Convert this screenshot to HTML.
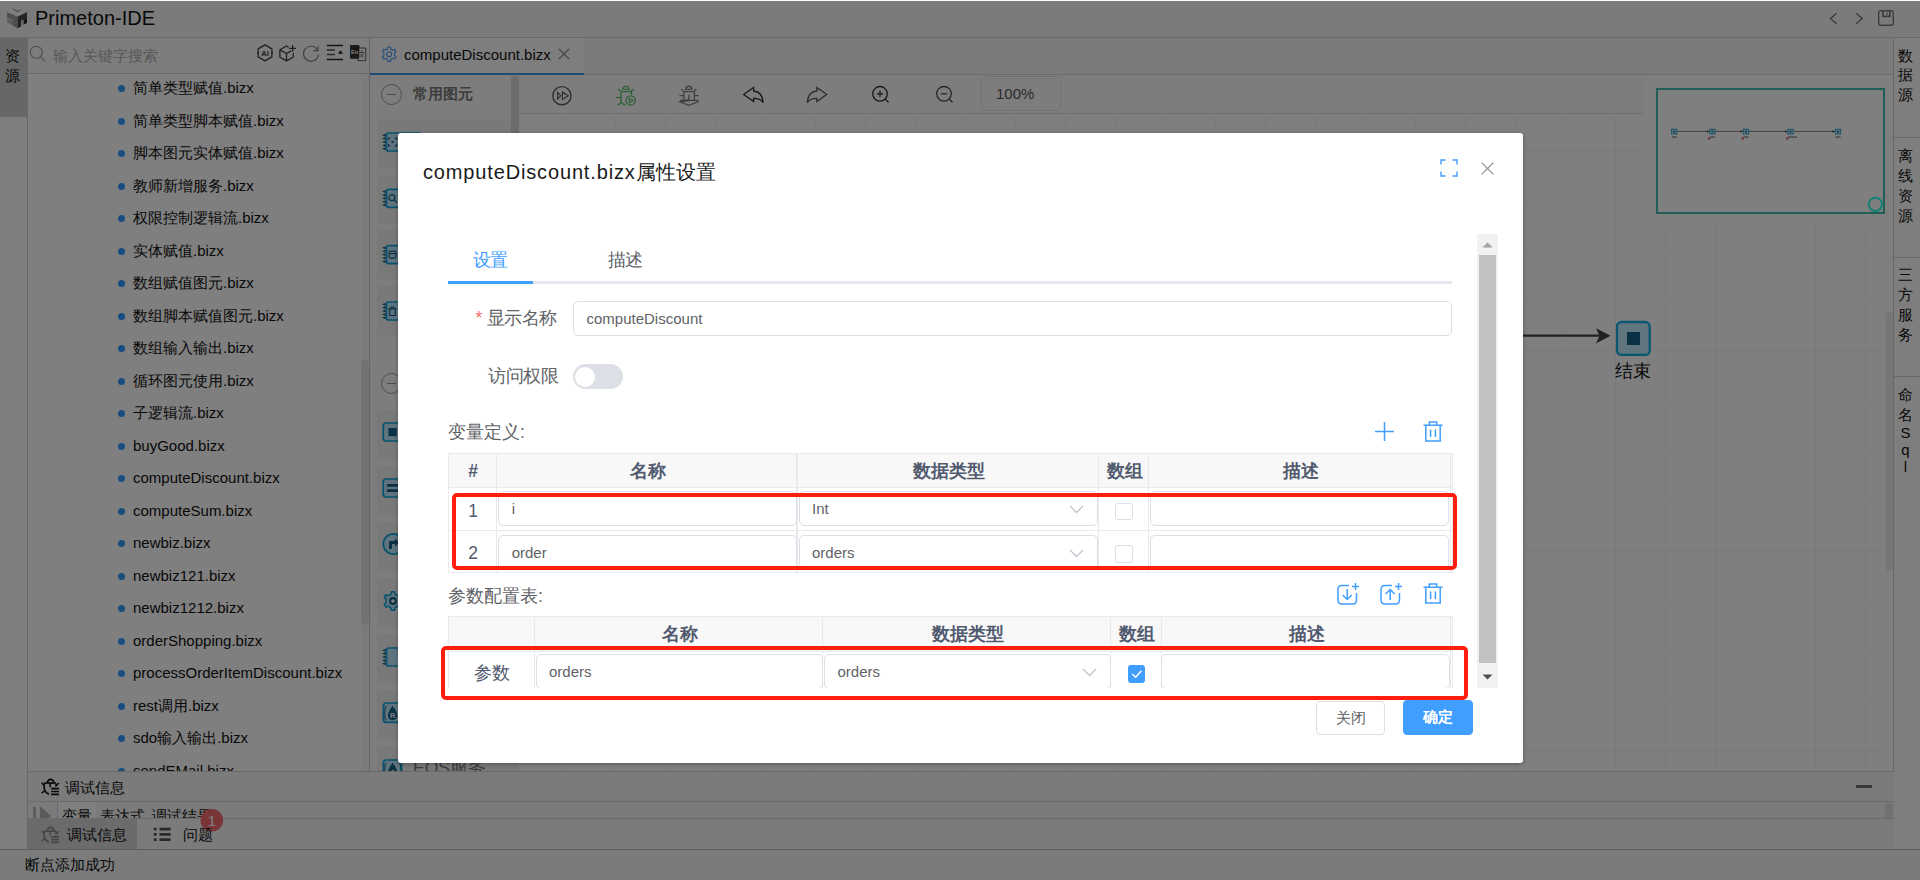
<!DOCTYPE html>
<html lang="zh">
<head>
<meta charset="utf-8">
<title>Primeton-IDE</title>
<style>
*{box-sizing:border-box;margin:0;padding:0}
html,body{width:1920px;height:880px;overflow:hidden;background:#fff}
body{position:relative;font-family:"Liberation Sans",sans-serif;font-size:15px;color:#141414}
.abs{position:absolute}
#app{position:absolute;left:0;top:0;width:1920px;height:880px;background:#fff;overflow:hidden}
#mask{position:absolute;left:0;top:1px;width:1920px;height:879px;background:rgba(0,0,0,.5)}
/* header */
#hdr{left:0;top:0;width:1920px;height:38px;background:#f6f6f6;border-bottom:1px solid #d4d4d4}
#hdr .ttl{left:35px;top:6px;font-size:20px;line-height:24px;color:#111;white-space:nowrap}
/* left strip */
#lstrip{left:0;top:38px;width:28px;height:812px;background:#fdfdfd;border-right:1px solid #d0d0d0}
#restab{left:0;top:38px;width:27px;height:79px;background:#cecece;font-size:15px;line-height:20px;text-align:center;padding-top:8px;padding-right:3px;color:#111}
/* tree */
#tree{left:28px;top:38px;width:342px;height:733px;background:#fefefe;border-right:1px solid #cfcfcf;overflow:hidden}
#search{left:0;top:0;width:341px;height:36px;border-bottom:1px solid #d0d0d0;background:#fbfbfb}
#search .ph{left:25px;top:8px;font-size:15px;line-height:20px;color:#b0b0b0;white-space:nowrap}
.ti{position:absolute;left:105px;height:20px;line-height:20px;font-size:15px;white-space:nowrap;color:#111}
.ti:before{content:"";position:absolute;left:-15px;top:7px;width:7px;height:7px;border-radius:50%;background:#3399ff}
#tst{left:333px;top:36px;width:8px;height:697px;background:#f7f7f7}
#tsb{left:333px;top:322px;width:8px;height:265px;border-radius:4px;background:#e6e6e6}
/* editor tabs */
#tabbar{left:370px;top:38px;width:1523px;height:37px;background:#f7f7f7;border-bottom:1px solid #d6d6d6}
#tab1{left:0;top:0;width:214px;height:36.5px;background:#fcfcfc;border-bottom:2px solid #3e96ee}
#tab1 .tx{left:34px;top:7px;font-size:15px;line-height:20px;color:#111;white-space:nowrap}
/* palette */
#pal{left:370px;top:75px;width:149px;height:696px;background:#fafafa;overflow:hidden}
.pi{position:absolute;left:7px;width:134px;height:49px;background:#f3f3f3}
#palsb{left:141px;top:0;width:8px;height:696px;background:#f0f0f0}
#palth{left:141px;top:1px;width:8px;height:230px;border-radius:4px;background:#d8d8d8}
.grp{position:absolute;left:43px;font-size:15px;font-weight:bold;color:#7a7a7a;line-height:20px;white-space:nowrap}
.circ{position:absolute;left:11px;width:21px;height:21px;border:1.3px solid #9a9a9a;border-radius:50%}
.circ:after{content:"";position:absolute;left:4.5px;top:8.5px;width:9px;height:1.5px;background:#9a9a9a}
/* toolbar */
#tb{left:519px;top:75px;width:1374px;height:39px;background:#fbfbfb;border-bottom:1px solid #e2e2e2}
#zoombox{left:462px;top:1px;width:80px;height:35px;border:1px solid #e4e4e4;border-radius:5px;font-size:15px;line-height:33px;color:#555;padding-left:14px}
/* canvas */
#cv{left:519px;top:114px;width:1366px;height:657px;background-color:#fff;
background-image:linear-gradient(to right,#f4f4f4 1px,transparent 1px),linear-gradient(to bottom,#f4f4f4 1px,transparent 1px);
background-size:50px 50px;background-position:46px 37px}
#cvsb{left:1885px;top:75px;width:8px;height:696px;background:#fdfdfd}
#cvth{left:1886px;top:312px;width:7px;height:259px;border-radius:4px;background:#ececec}
#mini{left:1656px;top:88px;width:229px;height:126px;border:2px solid #3fbfae;background:#fff}
/* right strip */
#rstrip{left:1893px;top:38px;width:27px;height:812px;background:#fdfdfd;border-left:1px solid #d0d0d0}
.rc{position:absolute;left:-1.5px;width:26px;height:20px;text-align:center;font-size:15px;line-height:20px;color:#111}
#minibox{left:1644px;top:75px;width:241px;height:150px;background:#fff}
/* bottom */
#bot{left:28px;top:771px;width:1866px;height:79px;background:#f6f6f6;overflow:hidden}
#status{left:0;top:849px;width:1920px;height:31px;background:#f6f6f6;border-top:1px solid #b8b8b8}
#status .tx{left:25px;top:4.5px;font-size:15px;line-height:20px;color:#111}
.bt{font-size:15px;line-height:20px;color:#111;white-space:nowrap}
/* modal */
#dlg{left:398px;top:133px;width:1125px;height:630px;background:#fff;border-radius:3px;box-shadow:0 1px 4px rgba(0,0,0,.3)}
#dl{left:0;top:0;width:1920px;height:880px;color:#606266}
#dl .title{left:423px;top:157px;font-size:20px;line-height:30px;color:#1a1a1a;letter-spacing:.85px;white-space:nowrap}
#dl .title .cj{letter-spacing:.15px;margin-left:0}
#sc{left:0;top:234px;width:1477px;height:454px;overflow:hidden}
#sc>*{margin-top:-234px}
.tab{font-size:17.5px;line-height:26px;white-space:nowrap;letter-spacing:-.4px}
.ls{letter-spacing:-.5px}
.lab{font-size:17.5px;line-height:26px;white-space:nowrap;color:#606266}
.in{border:1px solid #dcdfe6;border-radius:5px;background:#fff;font-size:15px;line-height:33px;padding-left:12.5px;color:#606266;white-space:nowrap}
.cb{width:17.5px;height:17.5px;border:1px solid #dcdfe6;border-radius:2.5px;background:#fff}
.cb.on{background:#409eff;border-color:#409eff}
.c{border:1px solid #e8eaec;text-align:center;white-space:nowrap;padding-left:3px}
.c.th{background:#f8f8f9;font-weight:bold;font-size:17.5px;color:#515a6e}
.c.td{background:#fff;font-size:17.5px;color:#515a6e}
.c.g{padding:0}
.c.f{padding-left:1px}
.btn{border-radius:4px;font-size:15px;line-height:32px;text-align:center}
.red{border:4px solid #ff1d0e;border-radius:5px}
</style>
</head>
<body>
<div id="app">
<div id="hdr" class="abs">
<svg class="abs" style="left:6px;top:6px" width="23" height="24" viewBox="0 0 23 24">
<polygon points="11.3,1 21,6.1 11.6,10.7 1.1,6" fill="#fdfdfd"/>
<polygon points="7,2.1 11.3,4.7 14.8,2.9 14.8,4.3 11.3,6.3 7,3.7" fill="#a4a4a4"/>
<polygon points="1.1,6 11.6,10.7 11.6,22.2 7.2,20 7.2,14.3 1.1,11.4" fill="#9c9c9c"/>
<polygon points="1.1,11.4 7.2,14.3 7.2,15 1.1,12.1" fill="#d4d4d4"/>
<polygon points="1.1,12.1 6.3,14.5 6.3,19 1.1,16.7" fill="#bcbcbc"/>
<polygon points="6.3,14.5 7.2,15 7.2,19.5 6.3,19" fill="#7c7c7c"/>
<polygon points="11.6,10.7 21,6.1 21,12 15.1,14.9 15.1,20.4 11.6,22.2" fill="#484848"/>
<polygon points="15.1,14.9 17.7,13.7 17.7,18.7 15.1,19.9" fill="#d0d0d0"/>
<polygon points="17.7,13.7 21,12 21,16.9 17.7,18.6" fill="#262626"/>
</svg>
<div class="abs ttl">Primeton-IDE</div>
<svg class="abs" style="left:1826px;top:8px" width="72" height="22" viewBox="0 0 72 22" fill="none" stroke="#7a7a7a" stroke-width="1.4">
<path d="M10.6 5.3 L4.4 10.6 L10.6 15.9"/><path d="M30 5.3 L36.2 10.6 L30 15.9"/>
<rect x="52.7" y="2.7" width="14.6" height="14.6" rx="2"/><path d="M57 3 V8.4 H63.8 V3" stroke-width="1.7"/><path d="M61.2 4.4 V6.8" stroke-width="1.2"/>
</svg>
</div>
<div id="lstrip" class="abs"></div><div id="restab" class="abs">资<br>源</div>
<div id="tree" class="abs"><div id="search" class="abs"><svg class="abs" style="left:1px;top:7.2px" width="18" height="18" viewBox="0 0 18 18" fill="none" stroke="#9c9c9c" stroke-width="1.1"><circle cx="7.3" cy="7.3" r="6"/><path d="M11.7 11.7 L16.3 16.3"/></svg><div class="abs ph">输入关键字搜索</div><svg class="abs" style="left:226px;top:6px" width="116" height="22" viewBox="0 0 116 22" fill="none" stroke="#3c3c3c" stroke-width="1.25" stroke-linejoin="round">
<path d="M11 0.9 L17.9 4.9 V12.9 L11 16.9 L4.1 12.9 V4.9 Z"/><text x="11" y="11.8" font-size="7.5" font-weight="bold" fill="#3c3c3c" stroke="none" text-anchor="middle" font-family="Liberation Sans">AI</text>
<circle cx="4.1" cy="8.9" r="0.9" fill="#3c3c3c" stroke="none"/><circle cx="17.9" cy="8.9" r="0.9" fill="#3c3c3c" stroke="none"/>
<path d="M34.6 3.2 L32.5 2 L25.9 5.7 V13.2 L32.5 16.9 L39.2 13.2 V9 M25.9 5.7 L32.5 9.5 L37.2 6.9 M32.5 9.5 V16.9"/><path d="M38.6 1 V7.8 M35.2 4.4 H42"/>
<path d="M63.3 5.6 A7.5 7.5 0 1 0 64.5 10.6" stroke="#848484" stroke-width="1.2"/><path d="M64 2.2 V6.7 H59.5" stroke="#848484" stroke-width="1.2"/>
<path d="M72.9 1.5 H89 M72.9 15.5 H89" stroke="#2a2a2a" stroke-width="1.5"/><path d="M72.9 6 H81 M72.9 10.6 H81" stroke="#5a5a5a" stroke-width="1.5"/><path d="M83.8 9.8 L86.5 6.2 L89.2 9.8 Z" fill="#2a2a2a" stroke="none"/>
<rect x="96" y="1.3" width="9.3" height="13.3" rx="1" fill="#333" stroke="none"/><text x="100.6" y="10" font-size="5.5" font-weight="bold" fill="#fff" stroke="none" text-anchor="middle" font-family="Liberation Sans">En</text>
<rect x="103.9" y="4" width="7.9" height="12.7" fill="#fafafa" stroke="#4a4a4a" stroke-width="0.9"/><path d="M105.5 8.5 H110.2 M107.9 6.5 V8.5 M106 13.5 L109.8 9.5 M106.2 10 L109.8 13.5" stroke="#4a4a4a" stroke-width="0.8"/>
<rect x="96" y="1.3" width="9.3" height="13.3" rx="1" fill="#333" stroke="none"/><text x="100.6" y="10" font-size="5.5" font-weight="bold" fill="#fff" stroke="none" text-anchor="middle" font-family="Liberation Sans">En</text>
</svg></div>
<div class="ti" style="top:40.2px">简单类型赋值.bizx</div>
<div class="ti" style="top:72.8px">简单类型脚本赋值.bizx</div>
<div class="ti" style="top:105.2px">脚本图元实体赋值.bizx</div>
<div class="ti" style="top:137.8px">教师新增服务.bizx</div>
<div class="ti" style="top:170.2px">权限控制逻辑流.bizx</div>
<div class="ti" style="top:202.8px">实体赋值.bizx</div>
<div class="ti" style="top:235.2px">数组赋值图元.bizx</div>
<div class="ti" style="top:267.8px">数组脚本赋值图元.bizx</div>
<div class="ti" style="top:300.2px">数组输入输出.bizx</div>
<div class="ti" style="top:332.8px">循环图元使用.bizx</div>
<div class="ti" style="top:365.2px">子逻辑流.bizx</div>
<div class="ti" style="top:397.8px">buyGood.bizx</div>
<div class="ti" style="top:430.2px">computeDiscount.bizx</div>
<div class="ti" style="top:462.8px">computeSum.bizx</div>
<div class="ti" style="top:495.2px">newbiz.bizx</div>
<div class="ti" style="top:527.8px">newbiz121.bizx</div>
<div class="ti" style="top:560.2px">newbiz1212.bizx</div>
<div class="ti" style="top:592.8px">orderShopping.bizx</div>
<div class="ti" style="top:625.2px">processOrderItemDiscount.bizx</div>
<div class="ti" style="top:657.8px">rest调用.bizx</div>
<div class="ti" style="top:690.2px">sdo输入输出.bizx</div>
<div class="ti" style="top:722.8px">sendEMail.bizx</div>
<div id="tst" class="abs"></div><div id="tsb" class="abs"></div></div>
<div id="tabbar" class="abs"><div id="tab1" class="abs"><svg class="abs" style="left:11.3px;top:8.2px" width="16.4" height="16.4" viewBox="0 0 16 16" fill="none" stroke="#4a9cf0" stroke-width="1.1"><circle cx="8" cy="8" r="2.4"/><path d="M6.8 1 H9.2 L9.7 3 L11.5 4 L13.4 3.3 L14.6 5.4 L13.2 6.8 V9.2 L14.6 10.6 L13.4 12.7 L11.5 12 L9.7 13 L9.2 15 H6.8 L6.3 13 L4.5 12 L2.6 12.7 L1.4 10.6 L2.8 9.2 V6.8 L1.4 5.4 L2.6 3.3 L4.5 4 L6.3 3 Z"/></svg><div class="abs tx">computeDiscount.bizx</div><svg class="abs" style="left:188px;top:10.4px" width="12" height="12" viewBox="0 0 12 12" stroke="#8a8a8a" stroke-width="1.2"><path d="M1 1 L11 11 M11 1 L1 11"/></svg></div></div>
<div id="pal" class="abs">
<div class="circ" style="top:9px"></div><div class="grp" style="top:9px">常用图元</div>
<div class="pi" style="top:44px"></div>
<div class="pi" style="top:100px"></div>
<div class="pi" style="top:155px"></div>
<div class="pi" style="top:211px"></div>
<div class="circ" style="top:298px"></div>
<div class="pi" style="top:335px"></div>
<div class="pi" style="top:391px"></div>
<div class="pi" style="top:447px"></div>
<div class="pi" style="top:503px"></div>
<div class="pi" style="top:559px"></div>
<div class="pi" style="top:615px"></div>
<div class="pi" style="top:671px"></div>
<svg class="abs" style="left:0;top:0" width="149" height="696" viewBox="0 0 149 696"><rect x="16.5" y="58.0" width="35" height="18" rx="2" fill="#bfe8fc" stroke="#10a6de" stroke-width="1.7"/><g fill="#146488"><path d="M12 60.2 L15.6 61.7 V58.7 Z"/><path d="M12 63.6 L15.6 65.1 V62.1 Z"/><path d="M12 67.0 L15.6 68.5 V65.5 Z"/><path d="M12 70.4 L15.6 71.9 V68.9 Z"/><path d="M12 73.8 L15.6 75.3 V72.3 Z"/></g><g transform="translate(18.5,63.0)" fill="none" stroke="#146488" stroke-width="1.2"><path d="M0 2 V0 H2 M6 0 H8 V2 M8 6 V8 H6 M2 8 H0 V6"/><rect x="3" y="3" width="2" height="2" fill="#146488" stroke="none"/></g><rect x="16.5" y="114.3" width="35" height="18" rx="2" fill="#bfe8fc" stroke="#10a6de" stroke-width="1.7"/><g fill="#146488"><path d="M12 116.5 L15.6 118.0 V115.0 Z"/><path d="M12 119.9 L15.6 121.4 V118.4 Z"/><path d="M12 123.3 L15.6 124.8 V121.8 Z"/><path d="M12 126.7 L15.6 128.2 V125.2 Z"/><path d="M12 130.1 L15.6 131.6 V128.6 Z"/></g><g transform="translate(18.5,119.3)" fill="none" stroke="#146488" stroke-width="1.2"><circle cx="3.4" cy="3.4" r="3"/><path d="M5.6 5.6 L8.4 8.4"/></g><rect x="16.5" y="170.6" width="35" height="18" rx="2" fill="#bfe8fc" stroke="#10a6de" stroke-width="1.7"/><g fill="#146488"><path d="M12 172.8 L15.6 174.3 V171.3 Z"/><path d="M12 176.2 L15.6 177.7 V174.7 Z"/><path d="M12 179.6 L15.6 181.1 V178.1 Z"/><path d="M12 183.0 L15.6 184.5 V181.5 Z"/><path d="M12 186.4 L15.6 187.9 V184.9 Z"/></g><g transform="translate(18.5,175.6)" fill="none" stroke="#146488" stroke-width="1.2"><rect x="0.5" y="0.5" width="7" height="7" rx="1.5"/><path d="M0.5 3 H7.5"/></g><rect x="16.5" y="227.0" width="35" height="18" rx="2" fill="#bfe8fc" stroke="#10a6de" stroke-width="1.7"/><g fill="#146488"><path d="M12 229.2 L15.6 230.7 V227.7 Z"/><path d="M12 232.6 L15.6 234.1 V231.1 Z"/><path d="M12 236.0 L15.6 237.5 V234.5 Z"/><path d="M12 239.4 L15.6 240.9 V237.9 Z"/><path d="M12 242.8 L15.6 244.3 V241.3 Z"/></g><g transform="translate(18.5,232.0)" fill="none" stroke="#146488" stroke-width="1.2"><path d="M0 1.8 H8 M2.5 1.5 V0 H5.5 V1.5 M1.2 2 V8.5 H6.8 V2"/></g><rect x="13.2" y="348" width="35" height="18" rx="3" fill="#bfe8fc" stroke="#10a6de" stroke-width="1.7"/><rect x="18.4" y="353" width="8.2" height="8.2" fill="#146488"/><rect x="13.2" y="404" width="35" height="18" rx="3" fill="#bfe8fc" stroke="#10a6de" stroke-width="1.7"/><path d="M17 410.4 H28 M17 415.6 H28" stroke="#146488" stroke-width="2.6"/><circle cx="23.5" cy="469" r="10.2" fill="#bfe8fc" stroke="#10a6de" stroke-width="1.8"/><path d="M19 474 V466 H25 V463.5 L29 467.5 L25 471.5 V469 H22 V474 Z" fill="#146488"/><g transform="translate(12.5,515.5) scale(1.31)" fill="#bfe8fc" stroke="#10a6de" stroke-width="1.2"><path d="M6.8 1 H9.2 L9.7 3 L11.5 4 L13.4 3.3 L14.6 5.4 L13.2 6.8 V9.2 L14.6 10.6 L13.4 12.7 L11.5 12 L9.7 13 L9.2 15 H6.8 L6.3 13 L4.5 12 L2.6 12.7 L1.4 10.6 L2.8 9.2 V6.8 L1.4 5.4 L2.6 3.3 L4.5 4 L6.3 3 Z"/><circle cx="8" cy="8" r="2.2" fill="#fff" stroke="#146488" stroke-width="1.6"/></g><rect x="16.5" y="573.0" width="35" height="18" rx="2" fill="#bfe8fc" stroke="#10a6de" stroke-width="1.7"/><g fill="#146488"><path d="M12 575.2 L15.6 576.7 V573.7 Z"/><path d="M12 578.6 L15.6 580.1 V577.1 Z"/><path d="M12 582.0 L15.6 583.5 V580.5 Z"/><path d="M12 585.4 L15.6 586.9 V583.9 Z"/><path d="M12 588.8 L15.6 590.3 V587.3 Z"/></g><g transform="translate(18.5,578.0)" fill="none" stroke="#146488" stroke-width="1.2"></g><rect x="13.4" y="628" width="18.2" height="19.4" rx="3" fill="#bfe8fc" stroke="#10a6de" stroke-width="1.7"/><path d="M16.6 631.4 q-1.6 0 -1.6 1.8 v3 q0 1.6 -1.2 1.9 q1.2 0.3 1.2 1.9 v3 q0 1.8 1.6 1.8" fill="none" stroke="#146488" stroke-width="1"/><path d="M22.6 630.8 C25 634.0 27.3 637.5 27.3 640.6 A4.7 4.7 0 0 1 17.9 640.6 C17.9 637.5 20.2 634.0 22.6 630.8 Z" fill="#146488"/><text x="22.6" y="643.4" font-size="7.5" font-weight="bold" text-anchor="middle" font-family="Liberation Sans" fill="#fff">R</text><path d="M28.8 631.4 q1.6 0 1.6 1.8 v3 q0 1.6 1.2 1.9 q-1.2 0.3 -1.2 1.9 v3 q0 1.8 -1.6 1.8" fill="none" stroke="#146488" stroke-width="1"/><rect x="13.4" y="685" width="18.2" height="19.4" rx="3" fill="#bfe8fc" stroke="#10a6de" stroke-width="1.7"/><path d="M16.6 688.4 q-1.6 0 -1.6 1.8 v3 q0 1.6 -1.2 1.9 q1.2 0.3 1.2 1.9 v3 q0 1.8 1.6 1.8" fill="none" stroke="#146488" stroke-width="1"/><path d="M22.6 687.8 C25 691.0 27.3 694.5 27.3 697.6 A4.7 4.7 0 0 1 17.9 697.6 C17.9 694.5 20.2 691.0 22.6 687.8 Z" fill="#146488"/><text x="22.6" y="700.4" font-size="7.5" font-weight="bold" text-anchor="middle" font-family="Liberation Sans" fill="#fff">A</text><path d="M28.8 688.4 q1.6 0 1.6 1.8 v3 q0 1.6 1.2 1.9 q-1.2 0.3 -1.2 1.9 v3 q0 1.8 -1.6 1.8" fill="none" stroke="#146488" stroke-width="1"/></svg>
<div class="abs" style="left:43px;top:683px;font-size:17.5px;line-height:20px;color:#777;white-space:nowrap">EOS服务</div>
<div id="palsb" class="abs"></div><div id="palth" class="abs"></div></div>
<div id="tb" class="abs"><svg class="abs" style="left:0;top:0" width="470" height="38" viewBox="0 0 470 38" fill="none">
<g stroke="#5c5c5c" stroke-width="1.4"><circle cx="42.9" cy="20.7" r="9.1"/><path d="M38.6 17.4 L41.8 20.7 L38.6 24 Z M43.4 17 L49.3 20.7 L43.4 24.4 Z" stroke-width="1.1"/></g>
<g transform="translate(97,11)" fill="none" stroke="#58c068" stroke-width="1.3">
<path d="M6.9 3.4 A3.1 3.1 0 0 1 13.1 3.4 Z"/><path d="M1.9 3 L5 5.6 M17.6 3 L14.5 5.6"/>
<path d="M5 5.6 H15.5 V9 M5 5.6 V14 A5 5 0 0 0 9.5 18.8"/><path d="M0 11.6 H5 M1.9 19.2 L5.3 16.3"/>
<circle cx="14.6" cy="14.4" r="4.6"/><path d="M13.2 12 L17 14.4 L13.2 16.8 Z" stroke-width="1.1"/></g>
<g transform="translate(160,11)" fill="none" stroke="#808080" stroke-width="1.3">
<path d="M6.6 3.4 A3.15 3.15 0 0 1 12.9 3.4 Z"/><path d="M2.3 3 L4.8 5.6 M17.2 3 L14.8 5.6"/>
<path d="M4.8 14.4 V5.6 H15.4 V14.4"/><path d="M0.4 9.6 H4.8 M15.4 9.6 H19.8"/><path d="M9.8 8.8 V14 H7.5"/>
<path d="M1 14.4 H8 M12 14.4 H19.1 V15.8 L9.8 19.4 L1 15.8 Z"/></g>
<g transform="translate(224,11)" stroke="#2c2c2c" stroke-width="1.3" stroke-linejoin="miter"><path d="M0.7 8.5 L10.6 1.5 V5 C17 5.6 19.8 10.5 20 16.8 C18.4 13.6 15.6 12.3 10.6 12.3 V15.6 Z"/></g>
<g transform="translate(288,11)" stroke="#5a5a5a" stroke-width="1.3"><path d="M19.7 8.5 L9.8 1.5 V5 C3.4 5.6 0.6 10.5 0.4 16.8 C2 13.6 4.8 12.3 9.8 12.3 V15.6 Z"/></g>
<g stroke="#303030" stroke-width="1.3"><circle cx="361" cy="18.8" r="7.3"/><path d="M366.4 24.2 L369.6 27.4"/><path d="M357.8 18.8 H364.2 M361 15.6 V22"/></g>
<g stroke="#4a4a4a" stroke-width="1.3"><circle cx="425" cy="18.8" r="7.3"/><path d="M430.4 24.2 L433.6 27.4"/><path d="M421.8 18.8 H428.2"/></g>
</svg><div id="zoombox" class="abs">100%</div></div>
<div id="cv" class="abs"></div><div id="cvsb" class="abs"></div><div id="cvth" class="abs"></div>
<svg class="abs" style="left:1523px;top:315px" width="140" height="50" viewBox="1523 315 140 50">
<path d="M1523 335.7 H1600" stroke="#444" stroke-width="2.2"/><path d="M1610.6 335.7 L1596 328.2 L1599.6 335.7 L1596 343.4 Z" fill="#444"/>
<rect x="1617" y="322" width="32.7" height="32.9" rx="4.5" fill="#c2ebff" stroke="#12aee6" stroke-width="2.3"/><rect x="1627" y="332" width="13" height="13" fill="#146488"/>
</svg><div class="abs" style="left:1614.5px;top:360px;font-size:17.5px;line-height:22px;color:#111;white-space:nowrap">结束</div>
<div id="minibox" class="abs"></div><div id="mini" class="abs"><svg class="abs" style="left:0;top:0" width="225" height="122" viewBox="1658 90 225 122"><path d="M1677 131.4 H1835" stroke="#555" stroke-width="0.7"/><rect x="1671.5" y="129.2" width="5.4" height="4.8" fill="#b8e4fa" stroke="#2aa0d0" stroke-width="0.9"/><rect x="1673.3" y="130.7" width="1.8" height="1.8" fill="#146488"/><rect x="1671.7" y="136.3" width="5" height="1.6" fill="#999"/><rect x="1709.7" y="129.2" width="5.4" height="4.8" fill="#b8e4fa" stroke="#2aa0d0" stroke-width="0.9"/><rect x="1711.5" y="130.7" width="1.8" height="1.8" fill="#146488"/><rect x="1709.9" y="136.3" width="5" height="1.6" fill="#999"/><rect x="1707.9" y="137.4" width="2.4" height="2.2" fill="#f06060"/><path d="M1709.2 131.4 l-2.4 -1.2 v2.4 Z" fill="#333"/><rect x="1743.3" y="129.2" width="5.4" height="4.8" fill="#b8e4fa" stroke="#2aa0d0" stroke-width="0.9"/><rect x="1745.1" y="130.7" width="1.8" height="1.8" fill="#146488"/><rect x="1743.5" y="136.3" width="5" height="1.6" fill="#999"/><rect x="1741.5" y="137.4" width="2.4" height="2.2" fill="#f06060"/><path d="M1742.8 131.4 l-2.4 -1.2 v2.4 Z" fill="#333"/><rect x="1787.8" y="129.2" width="5.4" height="4.8" fill="#b8e4fa" stroke="#2aa0d0" stroke-width="0.9"/><rect x="1789.6" y="130.7" width="1.8" height="1.8" fill="#146488"/><rect x="1788.0" y="136.3" width="9" height="1.6" fill="#999"/><rect x="1786.0" y="137.4" width="2.4" height="2.2" fill="#f06060"/><path d="M1787.3 131.4 l-2.4 -1.2 v2.4 Z" fill="#333"/><rect x="1835.3" y="129.2" width="5.4" height="4.8" fill="#b8e4fa" stroke="#2aa0d0" stroke-width="0.9"/><rect x="1837.1" y="130.7" width="1.8" height="1.8" fill="#146488"/><rect x="1835.5" y="136.3" width="5" height="1.6" fill="#999"/><path d="M1834.8 131.4 l-2.4 -1.2 v2.4 Z" fill="#333"/><circle cx="1875.4" cy="204.3" r="6.6" fill="none" stroke="#2affe6" stroke-width="2"/></svg></div>
<div id="rstrip" class="abs">
<div class="rc" style="top:7.6px">数</div>
<div class="rc" style="top:27.4px">据</div>
<div class="rc" style="top:47.2px">源</div>
<div class="rc" style="top:108.2px">离</div>
<div class="rc" style="top:128.2px">线</div>
<div class="rc" style="top:148.2px">资</div>
<div class="rc" style="top:168.2px">源</div>
<div class="rc" style="top:226.8px">三</div>
<div class="rc" style="top:246.8px">方</div>
<div class="rc" style="top:266.8px">服</div>
<div class="rc" style="top:286.8px">务</div>
<div class="rc" style="top:347.0px">命</div>
<div class="rc" style="top:366.6px">名</div>
<div class="rc" style="top:385.2px">S</div>
<div class="rc" style="top:402.2px">q</div>
<div class="rc" style="top:419.2px">l</div>
<div class="abs" style="left:0;top:98.5px;width:26px;height:1px;background:#d0d0d0"></div>
<div class="abs" style="left:0;top:218.5px;width:26px;height:1px;background:#d0d0d0"></div>
<div class="abs" style="left:0;top:337.5px;width:26px;height:1px;background:#d0d0d0"></div>
</div>
<div id="bot" class="abs"><div class="abs" style="left:0;top:0;width:1866px;height:1px;background:#d2d2d2"></div><div class="abs" style="left:0;top:30px;width:1866px;height:1px;background:#d4d4d4"></div><div class="abs" style="left:29px;top:31px;width:1px;height:16px;background:#d4d4d4"></div><div class="abs" style="left:30px;top:31px;width:38px;height:16px;background:#fff"></div><div class="abs" style="left:0;top:31px;width:1866px;height:16px;overflow:hidden"><div class="abs bt" style="left:34px;top:3.5px">变量</div><div class="abs bt" style="left:71.5px;top:3.5px">表达式</div><div class="abs bt" style="left:123.5px;top:3.5px">调试结果</div><svg class="abs" style="left:5px;top:3px" width="20" height="22" viewBox="0 0 20 22"><path d="M1.5 2 V20" stroke="#b4b4b4" stroke-width="2.6"/><path d="M7 1 L18 11 L7 21 Z" fill="#b4b4b4"/></svg></div><div class="abs" style="left:0;top:47px;width:1866px;height:1px;background:#d4d4d4"></div><div class="abs" style="left:0;top:47px;width:109px;height:31px;background:#d6d6d6"></div><svg class="abs" style="left:0;top:0" width="240" height="79" viewBox="0 0 240 79"><g transform="translate(13.2,7.5)" fill="none" stroke="#141414" stroke-width="1.7"><path d="M6.2 4.2 A3.2 3.4 0 0 1 12.6 4.2"/><path d="M3 4.5 H14.6"/><path d="M3.2 4.6 C2.2 9.5 3.4 14 7.8 15.7"/><path d="M0.5 4.3 L2.9 6.9 M0.5 14.6 L3.3 12.2 M17.6 4.6 L14.9 7.4 L14.5 4.6 M8.9 4.6 V8.8" stroke-width="1.5"/><path d="M10 10.2 H17.8 M10 13 H17.8 M10 15.8 H17.8" stroke-width="1.7"/></g><g transform="translate(13.2,55.6)" fill="none" stroke="#8c8c8c" stroke-width="1.7"><path d="M6.2 4.2 A3.2 3.4 0 0 1 12.6 4.2"/><path d="M3 4.5 H14.6"/><path d="M3.2 4.6 C2.2 9.5 3.4 14 7.8 15.7"/><path d="M0.5 4.3 L2.9 6.9 M0.5 14.6 L3.3 12.2 M17.6 4.6 L14.9 7.4 L14.5 4.6 M8.9 4.6 V8.8" stroke-width="1.5"/><path d="M10 10.2 H17.8 M10 13 H17.8 M10 15.8 H17.8" stroke-width="1.7"/></g><g stroke="#555" stroke-width="2.8"><path d="M131.5 58.2 H142.6 M131.5 63.4 H142.6 M131.5 68.6 H142.6"/><path d="M125.8 58.2 H128.6 M125.8 63.4 H128.6 M125.8 68.6 H128.6"/></g><circle cx="183.8" cy="49.2" r="11.3" fill="#f56c6c"/><text x="183.8" y="54.6" font-size="15" font-family="Liberation Sans" text-anchor="middle" fill="#fff">1</text></svg><div class="abs" style="left:37px;top:7px;font-size:15px;line-height:20px;color:#111;white-space:nowrap">调试信息</div><div class="abs" style="left:39px;top:54px;font-size:15px;line-height:20px;color:#111;white-space:nowrap">调试信息</div><div class="abs" style="left:154.5px;top:54px;font-size:15px;line-height:20px;color:#111;white-space:nowrap">问题</div><div class="abs" style="left:1828px;top:14px;width:16px;height:3px;background:#707070"></div><div class="abs" style="left:1857px;top:32px;width:8px;height:15px;border-radius:4px;background:#e2e2e2"></div></div>
<div id="status" class="abs"><div class="abs tx">断点添加成功</div></div>
</div>
<div id="mask"></div><div class="abs" style="left:0;top:0;width:1920px;height:1px;background:#fff"></div>
<div id="dlg" class="abs"></div><div id="dl" class="abs">
<div class="abs title">computeDiscount.bizx<span class="cj">属性设置</span></div>
<svg class="abs" style="left:1440px;top:159px" width="18" height="18" viewBox="0 0 18 18" fill="none" stroke="#409eff" stroke-width="1.4"><path d="M1 5.5 V1 H5.5 M12.5 1 H17 V5.5 M17 12.5 V17 H12.5 M5.5 17 H1 V12.5"/></svg>
<svg class="abs" style="left:1481px;top:162px" width="13" height="13" viewBox="0 0 13 13" fill="none" stroke="#909399" stroke-width="1.3"><path d="M0.6 0.6 L12.4 12.4 M12.4 0.6 L0.6 12.4"/></svg>
<div class="abs" style="left:1477px;top:234px;width:21px;height:454px;background:#f1f1f1"></div>
<div class="abs" style="left:1479px;top:255px;width:17px;height:408px;background:#c1c1c1"></div>
<svg class="abs" style="left:1477px;top:234px" width="21" height="21" viewBox="0 0 21 21"><path d="M5.5 13.5 L10.5 8.5 L15.5 13.5 Z" fill="#a3a3a3"/></svg>
<svg class="abs" style="left:1477px;top:667px" width="21" height="21" viewBox="0 0 21 21"><path d="M5.5 7.5 L10.5 12.5 L15.5 7.5 Z" fill="#505050"/></svg>
<div class="abs" id="sc">
<div class="abs" style="left:448px;top:281px;width:1004px;height:3px;background:#e4e7ed"></div>
<div class="abs" style="left:448px;top:281px;width:85px;height:3px;background:#409eff"></div>
<div class="abs tab" style="left:472.5px;top:247px;color:#409eff">设置</div>
<div class="abs tab" style="left:607.5px;top:247px;color:#606266">描述</div>
<div class="abs lab ls" style="left:475.5px;top:305px"><span style="color:#f56c6c;margin-right:5px">*</span>显示名称</div>
<div class="abs in" style="left:573.0px;top:301.0px;width:879.0px;height:35px">computeDiscount</div>
<div class="abs lab ls" style="left:488px;top:363px">访问权限</div>
<div class="abs" style="left:573px;top:364px;width:50px;height:25px;border-radius:13px;background:#dcdfe6"><div class="abs" style="left:2px;top:2.5px;width:20px;height:20px;border-radius:50%;background:#fff"></div></div>
<div class="abs lab" style="left:448px;top:419px">变量定义:</div>
<svg class="abs" style="left:1374px;top:421px" width="21" height="21" viewBox="0 0 21 21" fill="none" stroke="#409eff" stroke-width="1.5"><path d="M10.5 1 V20 M1 10.5 H20"/></svg>
<svg class="abs" style="left:1422px;top:420px" width="22" height="23" viewBox="0 0 22 23" fill="none" stroke="#409eff" stroke-width="1.5"><path d="M1.5 5.2 H20.5"/><path d="M7.3 5 V2 H14.7 V5"/><path d="M3.8 5.5 V21 H18.2 V5.5"/><path d="M8.6 9.5 V17 M13.4 9.5 V17"/></svg>
<div class="abs c th f" style="left:448.0px;top:453.0px;width:49.4px;height:35.3px;line-height:35.3px">#</div>
<div class="abs c td f" style="left:448.0px;top:487.3px;width:49.4px;height:44.1px;line-height:47.1px">1</div>
<div class="abs c td f" style="left:448.0px;top:530.4px;width:49.4px;height:43.0px;line-height:44.0px">2</div>
<div class="abs c th" style="left:496.4px;top:453.0px;width:301.1px;height:35.3px;line-height:35.3px">名称</div>
<div class="abs c td" style="left:496.4px;top:487.3px;width:301.1px;height:44.1px;line-height:47.1px"></div>
<div class="abs c td" style="left:496.4px;top:530.4px;width:301.1px;height:43.0px;line-height:44.0px"></div>
<div class="abs c th" style="left:796.5px;top:453.0px;width:302.0px;height:35.3px;line-height:35.3px">数据类型</div>
<div class="abs c td" style="left:796.5px;top:487.3px;width:302.0px;height:44.1px;line-height:47.1px"></div>
<div class="abs c td" style="left:796.5px;top:530.4px;width:302.0px;height:43.0px;line-height:44.0px"></div>
<div class="abs c th" style="left:1097.5px;top:453.0px;width:51.9px;height:35.3px;line-height:35.3px">数组</div>
<div class="abs c td" style="left:1097.5px;top:487.3px;width:51.9px;height:44.1px;line-height:47.1px"></div>
<div class="abs c td" style="left:1097.5px;top:530.4px;width:51.9px;height:43.0px;line-height:44.0px"></div>
<div class="abs c th" style="left:1148.4px;top:453.0px;width:302.4px;height:35.3px;line-height:35.3px">描述</div>
<div class="abs c td" style="left:1148.4px;top:487.3px;width:302.4px;height:44.1px;line-height:47.1px"></div>
<div class="abs c td" style="left:1148.4px;top:530.4px;width:302.4px;height:43.0px;line-height:44.0px"></div>
<div class="abs c th g" style="left:1449.8px;top:453.0px;width:3.2px;height:35.3px;line-height:35.3px"></div>
<div class="abs c td g" style="left:1449.8px;top:487.3px;width:3.2px;height:44.1px;line-height:47.1px"></div>
<div class="abs c td g" style="left:1449.8px;top:530.4px;width:3.2px;height:43.0px;line-height:44.0px"></div>
<div class="abs in" style="left:498.2px;top:491.4px;width:299.0px;height:35px">i</div>
<div class="abs in" style="left:798.5px;top:491.4px;width:299.5px;height:35px">Int</div><svg class="abs" style="left:1069.0px;top:504.9px" width="15" height="9" viewBox="0 0 15 9" fill="none" stroke="#c0c4cc" stroke-width="1.3"><path d="M1 1 L7.5 7.5 L14 1"/></svg>
<div class="abs cb" style="left:1115.3px;top:502.7px"></div>
<div class="abs in" style="left:1149.5px;top:491.4px;width:299.5px;height:35px"></div>
<div class="abs in" style="left:498.2px;top:535.0px;width:299.0px;height:35px">order</div>
<div class="abs in" style="left:798.5px;top:535.0px;width:299.5px;height:35px">orders</div><svg class="abs" style="left:1069.0px;top:548.5px" width="15" height="9" viewBox="0 0 15 9" fill="none" stroke="#c0c4cc" stroke-width="1.3"><path d="M1 1 L7.5 7.5 L14 1"/></svg>
<div class="abs cb" style="left:1115.3px;top:545.2px"></div>
<div class="abs in" style="left:1149.5px;top:535.0px;width:299.5px;height:35px"></div>
<div class="abs lab" style="left:448px;top:583px">参数配置表:</div>
<svg class="abs" style="left:1336px;top:582px" width="24" height="24" viewBox="0 0 24 24" fill="none" stroke="#409eff" stroke-width="1.5"><path d="M13 3.5 H6 Q2 3.5 2 7.5 V18 Q2 22 6 22 H16.5 Q20.5 22 20.5 18 V11"/><path d="M11.2 7 V17.5 M6.7 13 L11.2 17.5 L15.7 13"/><path d="M19.5 1 V8 M16 4.5 H23"/></svg>
<svg class="abs" style="left:1379px;top:582px" width="24" height="24" viewBox="0 0 24 24" fill="none" stroke="#409eff" stroke-width="1.5"><path d="M13 3.5 H6 Q2 3.5 2 7.5 V18 Q2 22 6 22 H16.5 Q20.5 22 20.5 18 V11"/><path d="M11.2 18 V7.5 M6.7 12 L11.2 7.5 L15.7 12"/><path d="M19.5 1 V8 M16 4.5 H23"/></svg>
<svg class="abs" style="left:1422px;top:582px" width="22" height="23" viewBox="0 0 22 23" fill="none" stroke="#409eff" stroke-width="1.5"><path d="M1.5 5.2 H20.5"/><path d="M7.3 5 V2 H14.7 V5"/><path d="M3.8 5.5 V21 H18.2 V5.5"/><path d="M8.6 9.5 V17 M13.4 9.5 V17"/></svg>
<div class="abs c th" style="left:448.0px;top:616.2px;width:86.6px;height:35.8px;line-height:35.8px"></div>
<div class="abs c td f" style="left:448.0px;top:651.0px;width:86.6px;height:44.0px;line-height:42.0px">参数</div>
<div class="abs c th" style="left:533.6px;top:616.2px;width:289.4px;height:35.8px;line-height:35.8px">名称</div>
<div class="abs c td" style="left:533.6px;top:651.0px;width:289.4px;height:44.0px;line-height:42.0px"></div>
<div class="abs c th" style="left:822.0px;top:616.2px;width:288.8px;height:35.8px;line-height:35.8px">数据类型</div>
<div class="abs c td" style="left:822.0px;top:651.0px;width:288.8px;height:44.0px;line-height:42.0px"></div>
<div class="abs c th" style="left:1109.8px;top:616.2px;width:51.9px;height:35.8px;line-height:35.8px">数组</div>
<div class="abs c td" style="left:1109.8px;top:651.0px;width:51.9px;height:44.0px;line-height:42.0px"></div>
<div class="abs c th" style="left:1160.7px;top:616.2px;width:290.1px;height:35.8px;line-height:35.8px">描述</div>
<div class="abs c td" style="left:1160.7px;top:651.0px;width:290.1px;height:44.0px;line-height:42.0px"></div>
<div class="abs c th g" style="left:1449.8px;top:616.2px;width:3.2px;height:35.8px;line-height:35.8px"></div>
<div class="abs c td g" style="left:1449.8px;top:651.0px;width:3.2px;height:44.0px;line-height:42.0px"></div>
<div class="abs in" style="left:535.5px;top:654.4px;width:287.0px;height:35px">orders</div>
<div class="abs in" style="left:824.0px;top:654.4px;width:286.5px;height:35px">orders</div><svg class="abs" style="left:1081.5px;top:667.9px" width="15" height="9" viewBox="0 0 15 9" fill="none" stroke="#c0c4cc" stroke-width="1.3"><path d="M1 1 L7.5 7.5 L14 1"/></svg>
<div class="abs cb on" style="left:1127.6px;top:665.1px"><svg width="17.5" height="17.5" viewBox="0 0 17.5 17.5" fill="none" stroke="#fff" stroke-width="1.5" style="position:absolute;left:-1px;top:-1px"><path d="M4.3 9 L7.6 12.2 L13.4 5.8"/></svg></div>
<div class="abs in" style="left:1161.0px;top:654.4px;width:288.5px;height:35px"></div>
</div>
<div class="abs btn" style="left:1316px;top:700.5px;width:69px;height:34.5px;border:1px solid #dcdfe6;color:#606266;background:#fff">关闭</div>
<div class="abs btn" style="left:1403px;top:700px;width:70px;height:35px;background:#409eff;color:#fff;border:1px solid #409eff;font-weight:bold">确定</div>
<div class="abs red" style="left:452px;top:492.8px;width:1005px;height:77.2px"></div>
<div class="abs red" style="left:441px;top:646px;width:1027px;height:54px"></div>
</div>
</body>
</html>
